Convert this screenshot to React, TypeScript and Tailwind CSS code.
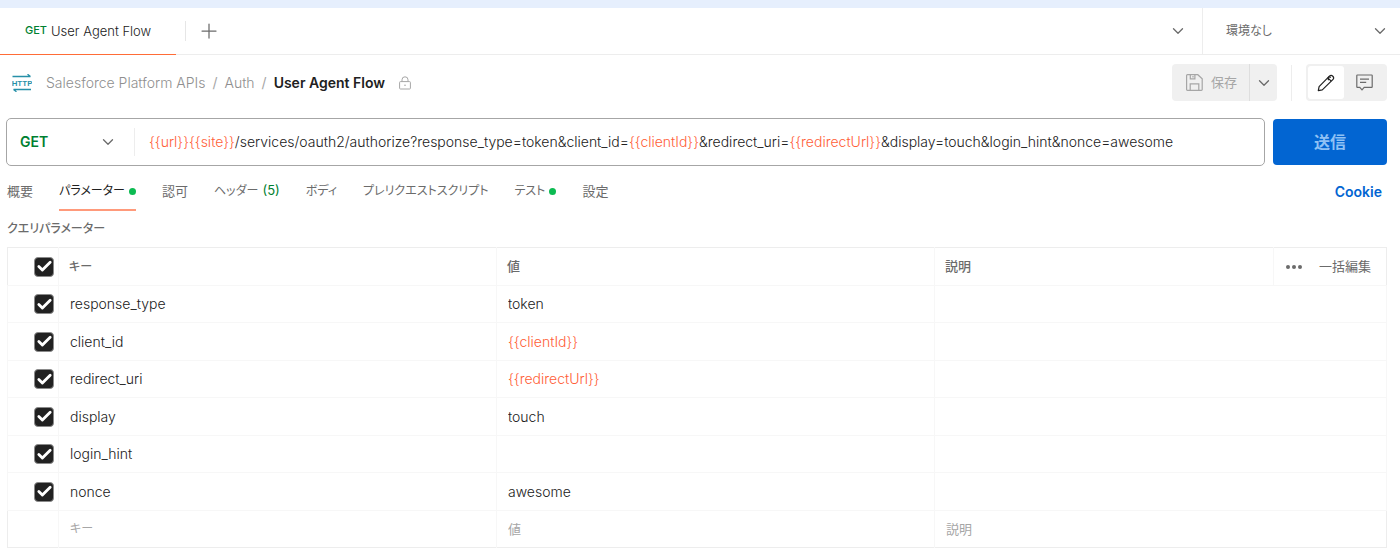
import { useState } from "react";
import { Check, ChevronDown, Plus } from "lucide-react";
import clsx from "clsx";

type Param = {
  key: string;
  value: string;
};

const initialParams: Param[] = [
  { key: "response_type", value: "token" },
  { key: "client_id", value: "{{clientId}}" },
  { key: "redirect_uri", value: "{{redirectUrl}}" },
  { key: "display", value: "touch" },
  { key: "login_hint", value: "" },
  { key: "nonce", value: "awesome" },
];

// kana labels are set smaller than the kanji ones
const tabs = [
  { label: "概要" },
  { label: "パラメーター", kana: true, dot: true },
  { label: "認可" },
  { label: "ヘッダー", kana: true, count: 5 },
  { label: "ボディ", kana: true },
  { label: "プレリクエストスクリプト", kana: true },
  { label: "テスト", kana: true, dot: true },
  { label: "設定" },
];

function HttpIcon() {
  return (
    <svg width="20" height="18" viewBox="0 0 20 18" fill="none" stroke="#2790a8" aria-hidden="true">
      <path d="M0.5 2.5h18M15.5 0.2l3 2.3" strokeWidth="1.3" />
      <path d="M19 15.5H1.5M4.5 17.8l-3-2.3" strokeWidth="1.3" />
      <text
        x="10"
        y="12"
        textAnchor="middle"
        fontSize="8"
        fontWeight="600"
        fill="#2790a8"
        stroke="none"
        fontFamily="Roboto, sans-serif"
      >
        HTTP
      </text>
    </svg>
  );
}

function LockIcon() {
  return (
    <svg width="12" height="14" viewBox="0 0 12 14" fill="none" stroke="#a6a6a6" aria-hidden="true">
      <rect x="0.6" y="5.6" width="10.8" height="7.4" rx="0.8" />
      <path d="M3 5.5V3.8a3 3 0 0 1 6 0v1.7" />
      <circle cx="6" cy="9.3" r="0.8" fill="#a6a6a6" stroke="none" />
    </svg>
  );
}

function SaveIcon() {
  return (
    <svg width="17" height="17" viewBox="0 0 17 17" fill="none" stroke="#a6a6a6" strokeWidth="1.2" aria-hidden="true">
      <path d="M1.4 0.7h10.4l4.4 4v10.8a0.8 0.8 0 0 1-.8.8H1.4a0.8 0.8 0 0 1-.8-.8v-14a0.8 0.8 0 0 1 .8-.8Z" />
      <path d="M4.3 0.9v3.9h4.6V0.9M7 2v1.4M4.2 16.2V9.9h8.6v6.3" />
    </svg>
  );
}

function PencilIcon() {
  return (
    <svg
      width="18"
      height="18"
      viewBox="0 0 18 18"
      fill="none"
      stroke="#212121"
      strokeWidth="1.2"
      strokeLinejoin="round"
      aria-hidden="true"
    >
      <path d="M1.3 16.7l.8-4L12.4 2.2a2.3 2.3 0 0 1 3.4 3.4L5.3 15.9Z" />
      <path d="M10.9 3.8l3.3 3.3M12.1 5.9a1.5 1.5 0 1 1 1.6-2.3" />
    </svg>
  );
}

function CommentIcon() {
  return (
    <svg width="17" height="17" viewBox="0 0 17 17" fill="none" stroke="#6b6b6b" strokeWidth="1.2" aria-hidden="true">
      <path d="M1.4 1h14.2a.6.6 0 0 1 .6.6v11.2a.6.6 0 0 1-.6.6H8.2L6 15.8l-2.2-2.4H1.4a.6.6 0 0 1-.6-.6V1.6a.6.6 0 0 1 .6-.6Z" />
      <path d="M4 5.2h9M4 8.4h6.2" />
    </svg>
  );
}

// Splits a string so that {{variables}} can be coloured
function Highlighted({ text }: { text: string }) {
  return (
    <>
      {text.split(/(\{\{\w+\}\})/).map((part, i) => (
        <span key={i} className={clsx(part.startsWith("{{") && "text-[#ff6037]")}>
          {part}
        </span>
      ))}
    </>
  );
}

function Checkbox({ label }: { label: string }) {
  return (
    <span className="relative ml-[26px] flex size-5">
      <input
        type="checkbox"
        defaultChecked
        aria-label={label}
        className="peer size-5 appearance-none rounded-[4px] border border-[#8a8a8a] checked:bg-[#212121]"
      />
      <Check
        className="pointer-events-none absolute inset-0 m-auto hidden text-white peer-checked:block"
        size={17}
        strokeWidth={4}
      />
    </span>
  );
}

export default function App() {
  const [url, setUrl] = useState(
    "{{url}}{{site}}/services/oauth2/authorize?response_type=token&client_id={{clientId}}&redirect_uri={{redirectUrl}}&display=touch&login_hint&nonce=awesome"
  );
  const [params, setParams] = useState(initialParams);
  const [activeTab, setActiveTab] = useState("パラメーター");

  function updateParam(index: number, field: keyof Param, value: string) {
    setParams(params.map((p, i) => (i === index ? { ...p, [field]: value } : p)));
  }

  return (
    <div className="min-h-screen bg-white font-[Inter,'Noto_Sans_CJK_JP',sans-serif] text-sm text-[#212121] [font-feature-settings:'palt']">
      <div className="h-2 bg-[#e6effd]" />

      {/* Open tabs and environment */}
      <header className="flex h-[47px] border-b border-[#ededed]">
        <div className="flex flex-1 items-center">
          <button className="-mb-px flex h-[47px] w-44 items-center gap-1 border-b border-[#ff6c37] pl-[25px] text-[13px] font-light">
            <span className="text-[11px] font-medium text-[#007f31]">GET</span>
            User Agent Flow
          </button>
          <span className="ml-[9px] h-5 w-px bg-[#e6e6e6]" />
          <button aria-label="新しいタブ" className="ml-[11px] text-[#6b6b6b]">
            <Plus size={24} strokeWidth={1.25} />
          </button>
          <button aria-label="タブ一覧" className="mr-[15px] ml-auto text-[#6b6b6b]">
            <ChevronDown size={18} strokeWidth={1.75} />
          </button>
        </div>
        <div className="relative w-[198px] border-l border-[#ededed]">
          <select
            aria-label="環境"
            className="h-full w-full appearance-none pl-[23px] text-xs text-[#6b6b6b]"
          >
            <option>環境なし</option>
          </select>
          <ChevronDown
            className="pointer-events-none absolute inset-y-0 right-[11px] my-auto text-[#6b6b6b]"
            size={18}
            strokeWidth={1.75}
          />
        </div>
      </header>

      {/* Breadcrumb and actions */}
      <div className="flex h-[63px] items-center pr-[13px] pb-2 pl-3">
        <HttpIcon />
        <nav className="ml-3.5 flex items-center gap-[7px] text-[#a6a6a6]">
          <a href="#collection" className="font-light text-[#8f8f8f]">
            Salesforce Platform APIs
          </a>
          <span>/</span>
          <a href="#auth" className="font-light text-[#8f8f8f]">
            Auth
          </a>
          <span>/</span>
          <span className="font-semibold text-[#212121]">User Agent Flow</span>
        </nav>
        <span className="ml-3.5">
          <LockIcon />
        </span>
        <div className="ml-auto flex h-[37px] rounded-[4px] bg-[#f0f0f0] text-[#a6a6a6]">
          <button className="flex items-center gap-2 pr-3 pl-3.5 text-[13px]">
            <SaveIcon />
            保存
          </button>
          <button
            aria-label="保存オプション"
            className="flex w-7 items-center justify-center border-l border-[#dedede] text-[#6b6b6b]"
          >
            <ChevronDown size={18} strokeWidth={1.75} />
          </button>
        </div>
        <span className="mx-3.5 h-9 w-px bg-[#ededed]" />
        <div className="flex h-[37px] rounded-[4px] bg-[#f0f0f0] p-0.5">
          <button aria-label="編集" className="flex w-9 items-center justify-center rounded-[3px] bg-white">
            <PencilIcon />
          </button>
          <button aria-label="コメント" className="flex w-[41px] items-center justify-center">
            <CommentIcon />
          </button>
        </div>
      </div>

      {/* Request line */}
      <div className="flex items-center gap-2 pr-[13px] pl-1.5">
        <div className="flex h-12 flex-1 items-center rounded-[5px] border border-[#a6a6a6]">
          <div className="relative w-32 border-r border-[#ededed]">
            <select
              aria-label="メソッド"
              className="h-7 w-full appearance-none pl-[13px] text-sm font-semibold text-[#007f31]"
            >
              <option>GET</option>
              <option>POST</option>
            </select>
            <ChevronDown
              className="pointer-events-none absolute inset-y-0 right-[17px] my-auto text-[#6b6b6b]"
              size={18}
              strokeWidth={1.75}
            />
          </div>
          <div className="relative ml-3.5 flex-1 font-light whitespace-pre">
            <div aria-hidden="true">
              <Highlighted text={url} />
            </div>
            <input
              aria-label="URL"
              value={url}
              onChange={(e) => setUrl(e.target.value)}
              className="absolute inset-0 w-full text-transparent caret-[#212121] outline-none"
            />
          </div>
        </div>
        <button className="h-[46px] w-[114px] rounded-[4px] bg-[#0265d2] text-base font-bold text-[#8fc1f5]">
          送信
        </button>
      </div>

      {/* Request sections */}
      <div className="flex h-[45px] items-end pr-[18px] pl-[7px] text-[#6b6b6b]">
        <div className="flex gap-[26px]">
          {tabs.map((tab) => (
            <button
              key={tab.label}
              onClick={() => setActiveTab(tab.label)}
              className={clsx(
                "flex h-[38px] items-center gap-1 border-b-2",
                tab.kana ? "text-xs" : "text-[13px]",
                activeTab === tab.label ? "border-[#ff9a7b] text-[#212121]" : "border-transparent"
              )}
            >
              {tab.label}
              {tab.count && <span className="text-[13px] text-[#007f31]">({tab.count})</span>}
              {tab.dot && <span className="size-[7px] rounded-full bg-[#0cbb52]" />}
            </button>
          ))}
        </div>
        <a href="#cookie" className="ml-auto flex h-[38px] items-center text-sm font-semibold text-[#0265d2]">
          Cookie
        </a>
      </div>

      <main className="pr-[13px] pl-[7px]">
        <h2 className="flex h-9 items-center text-xs font-medium text-[#6b6b6b]">クエリパラメーター</h2>
        <table className="w-full table-fixed border-collapse border border-[#ededed]">
          <colgroup>
            <col className="w-[51px]" />
            <col />
            <col />
            <col className="w-[339px]" />
            <col className="w-[113px]" />
          </colgroup>
          <thead>
            <tr className="h-[38px] text-left text-[13px] text-[#6b6b6b]">
              <th className="border-r border-b border-[#f7f7f7]">
                <Checkbox label="すべて選択" />
              </th>
              <th className="border-b border-[#f7f7f7] pl-2.5 text-xs font-medium">キー</th>
              <th className="border-b border-l border-[#f7f7f7] pl-2.5 font-medium">値</th>
              <th className="border-b border-l border-[#f7f7f7] pl-2.5 font-medium">説明</th>
              <th className="border-b border-l border-[#f7f7f7] font-normal">
                <div className="flex items-center justify-between pr-[15px] pl-3">
                  <button aria-label="その他" className="flex gap-0.5">
                    <span className="size-1 rounded-full bg-[#6b6b6b]" />
                    <span className="size-1 rounded-full bg-[#6b6b6b]" />
                    <span className="size-1 rounded-full bg-[#6b6b6b]" />
                  </button>
                  <button>一括編集</button>
                </div>
              </th>
            </tr>
          </thead>
          <tbody>
            {params.map((param, i) => (
              <tr key={i} className="font-light odd:h-[37px] even:h-[38px]">
                <td className="border border-[#f7f7f7]">
                  <Checkbox label={`${initialParams[i].key} を有効にする`} />
                </td>
                <td className="border border-[#f7f7f7] pl-[11px]">
                  <input
                    aria-label="キー"
                    value={param.key}
                    onChange={(e) => updateParam(i, "key", e.target.value)}
                    className="w-full outline-none"
                  />
                </td>
                <td className="border border-[#f7f7f7] pl-[11px]">
                  <input
                    aria-label="値"
                    value={param.value}
                    onChange={(e) => updateParam(i, "value", e.target.value)}
                    className={clsx("w-full outline-none", param.value.startsWith("{{") && "text-[#ff6037]")}
                  />
                </td>
                <td colSpan={2} className="border border-[#f7f7f7] pl-[11px]">
                  <input aria-label="説明" className="w-full outline-none" />
                </td>
              </tr>
            ))}
            <tr className="h-[37px] text-[13px]">
              <td className="border-r border-[#f7f7f7]" />
              <td className="border-r border-[#f7f7f7] pl-[11px] text-xs">
                <input aria-label="キー" placeholder="キー" className="w-full outline-none placeholder:text-[#a6a6a6]" />
              </td>
              <td className="border-r border-[#f7f7f7] pl-[11px]">
                <input aria-label="値" placeholder="値" className="w-full outline-none placeholder:text-[#a6a6a6]" />
              </td>
              <td colSpan={2} className="pl-[11px]">
                <input aria-label="説明" placeholder="説明" className="w-full outline-none placeholder:text-[#a6a6a6]" />
              </td>
            </tr>
          </tbody>
        </table>
      </main>
    </div>
  );
}
